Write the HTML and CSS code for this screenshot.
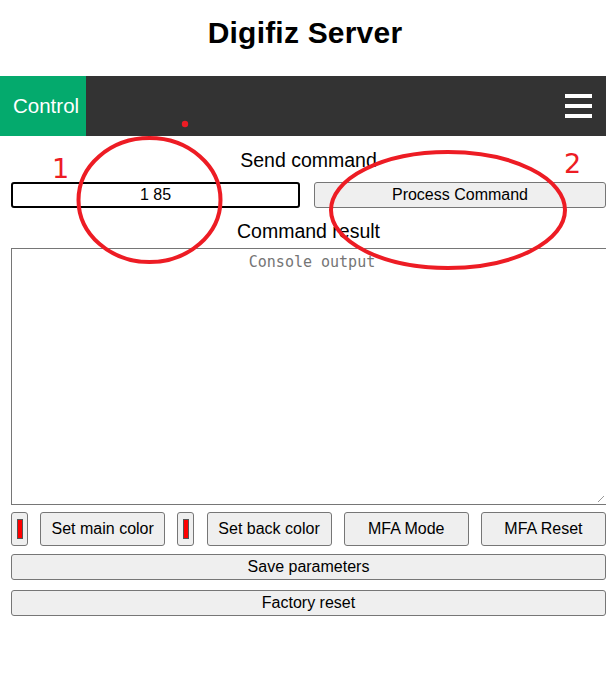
FILE: index.html
```html
<!DOCTYPE html>
<html>
<head>
<meta charset="utf-8">
<link rel="stylesheet" href="styles.css">
</head>
<body>
<div class="page">
  <header class="header"><h1 class="title">Digifiz Server</h1></header>
  <nav class="topnav">
    <a class="tab active">Control</a>
    <span class="burger"><i></i><i></i><i></i></span>
  </nav>
  <main class="content">
    <div class="label">Send command</div>
    <div class="cmd-row">
      <div class="cmd-input">1 85</div>
      <button class="btn">Process Command</button>
    </div>
    <div class="label label2">Command result</div>
    <div class="console"><span class="placeholder">Console output</span><span class="grip"></span></div>
    <div class="tools">
      <span class="swatch"><i></i></span>
      <button class="btn tool">Set main color</button>
      <span class="swatch"><i></i></span>
      <button class="btn tool">Set back color</button>
      <button class="btn tool">MFA Mode</button>
      <button class="btn tool">MFA Reset</button>
    </div>
    <button class="btn wide">Save parameters</button>
    <button class="btn wide">Factory reset</button>
  </main>
  <svg class="marks" width="606" height="692" viewBox="0 0 606 692">
    <circle cx="185" cy="124" r="3.2" fill="#ed1c24"/>
    <ellipse cx="149.5" cy="200" rx="71" ry="62" fill="none" stroke="#ed1c24" stroke-width="4"/>
    <ellipse cx="448" cy="210" rx="117" ry="58" fill="none" stroke="#ed1c24" stroke-width="4"/>
    <text x="52" y="178" class="num">1</text>
    <text x="564" y="173" class="num">2</text>
  </svg>
</div>
</body>
</html>
```
FILE: styles.css
```css
html, body { margin: 0; padding: 0; background: #fff; }
body { font-family: "Liberation Sans", Arial, sans-serif; color: #000; }
.page { position: relative; width: 606px; height: 692px; overflow: hidden; }
.header { height: 76px; display: flex; align-items: flex-start; justify-content: center; }
.title { margin: 15px 0 0 4px; font-size: 30px; line-height: 36px; font-weight: bold; letter-spacing: 0.2px; }
.topnav { height: 60px; background: #333; display: flex; align-items: center; justify-content: space-between; }
.tab { box-sizing: border-box; width: 86px; height: 60px; padding-left: 13px; background: #04aa6d; color: #fff; font-size: 20.5px; display: flex; align-items: center; }
.burger { display: flex; flex-direction: column; gap: 6px; margin-right: 14px; }
.burger i { display: block; width: 27px; height: 4px; background: #fff; }
.content { padding: 0 0 0 11px; display: flex; flex-direction: column; }
.label { text-align: center; font-size: 19.5px; line-height: 22px; margin-top: 13px; height: 24px; }
.label2 { margin-top: 12px; height: 28px; }
.cmd-row { display: grid; grid-template-columns: 289px 292px; gap: 14px; margin-top: 9px; height: 26px; }
.cmd-input { box-sizing: border-box; border: 2px solid #000; border-radius: 3px; height: 26px; text-align: center; font-size: 16px; line-height: 22px; }
.btn { box-sizing: border-box; font-family: "Liberation Sans", Arial, sans-serif; background: #efefef; border: 1px solid #767676; border-radius: 3px; font-size: 16px; color: #000; padding: 0; margin: 0; height: 26px; }
.console { position: relative; box-sizing: border-box; height: 257px; border: 1px solid #767676; border-right: none; text-align: center; }
.placeholder { font-family: "DejaVu Sans Mono", monospace; font-size: 15px; color: #757575; line-height: 26px; margin-left: 6px; }
.grip { position: absolute; right: 2px; bottom: 2px; width: 6px; height: 6px; background: linear-gradient(135deg, transparent 45%, #999 46%, #999 56%, transparent 57%); }
.tools { display: flex; justify-content: space-between; align-items: center; margin-top: 7px; height: 34px; }
.swatch { box-sizing: border-box; width: 17px; height: 34px; border: 1px solid #767676; border-radius: 3px; background: #efefef; display: flex; align-items: center; justify-content: center; }
.swatch i { display: block; width: 6px; height: 20px; background: #ff0000; border: 1px solid #555; box-sizing: border-box; }
.tool { width: 125px; height: 34px; }
.wide { width: 595px; height: 26px; margin-top: 8px; }
.wide + .wide { margin-top: 10px; }
.marks { position: absolute; left: 0; top: 0; pointer-events: none; }
.num { fill: #ed1c24; font-family: "DejaVu Sans", sans-serif; font-size: 27px; }
```
